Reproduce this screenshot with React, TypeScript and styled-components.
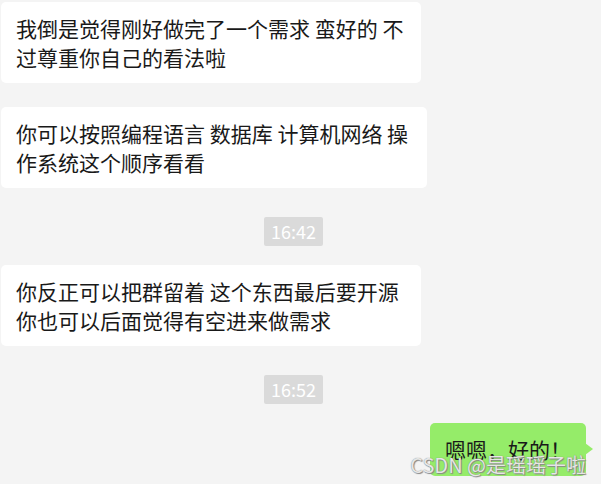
import React from 'react';
import styled, { createGlobalStyle } from 'styled-components';

const GlobalStyle = createGlobalStyle`
  html, body {
    margin: 0;
    padding: 0;
    background: #f4f4f4;
  }
  #root {
    width: 601px;
    height: 484px;
    overflow: hidden;
  }
`;

const Chat = styled.div`
  position: relative;
  box-sizing: border-box;
  width: 601px;
  height: 484px;
  padding: 2px 15px 0 1px;
  display: flex;
  flex-direction: column;
  background: #f4f4f4;
  font-family: "Microsoft YaHei", "Noto Sans CJK SC", sans-serif;
  color: #191919;
`;

const Row = styled.div<{ $mine?: boolean; $gap: number }>`
  display: flex;
  justify-content: ${(p) => (p.$mine ? 'flex-end' : 'flex-start')};
  margin-top: ${(p) => p.$gap}px;
`;

const Bubble = styled.div<{ $w?: number }>`
  box-sizing: border-box;
  width: ${(p) => (p.$w ? `${p.$w}px` : 'auto')};
  background: #ffffff;
  border-radius: 5px;
  padding: 12px 15px 12px 15px;
  font-size: 21px;
  line-height: 28.5px;
  white-space: nowrap;
`;

const MyBubble = styled(Bubble)`
  position: relative;
  background: #95ec69;
  &::after {
    content: '';
    position: absolute;
    right: -7px;
    top: 20px;
    border-top: 6px solid transparent;
    border-bottom: 6px solid transparent;
    border-left: 8px solid #95ec69;
  }
`;

const TimeRow = styled.div<{ $gap: number }>`
  display: flex;
  justify-content: center;
  margin-top: ${(p) => p.$gap}px;
`;

const Time = styled.span`
  background: #dadada;
  color: #ffffff;
  font-size: 18px;
  line-height: 29px;
  height: 29px;
  padding: 0 7px;
  border-radius: 2px;
`;

// CSDN watermark stamped over the bottom-right corner
const Watermark = styled.div`
  position: absolute;
  right: 15px;
  bottom: 9px;
  font-family: "Microsoft YaHei", "Noto Sans CJK SC", sans-serif;
  font-size: 20px;
  line-height: 21px;
  color: rgba(242, 242, 242, 0.92);
  text-shadow: 0 0 1px #6f6f6f, 1px 1px 1px #8a8a8a;
`;

export default function App() {
  return (
    <>
      <GlobalStyle />
      <Chat>
        <Row $gap={0}>
          <Bubble $w={420}>
            我倒是觉得刚好做完了一个需求 蛮好的 不
            <br />
            过尊重你自己的看法啦
          </Bubble>
        </Row>
        <Row $gap={24}>
          <Bubble $w={426}>
            你可以按照编程语言 数据库 计算机网络 操
            <br />
            作系统这个顺序看看
          </Bubble>
        </Row>
        <TimeRow $gap={29}>
          <Time>16:42</Time>
        </TimeRow>
        <Row $gap={19}>
          <Bubble $w={420}>
            你反正可以把群留着 这个东西最后要开源
            <br />
            你也可以后面觉得有空进来做需求
          </Bubble>
        </Row>
        <TimeRow $gap={29}>
          <Time>16:52</Time>
        </TimeRow>
        <Row $mine $gap={19}>
          <MyBubble>嗯嗯，好的！</MyBubble>
        </Row>
        <Watermark>CSDN @是瑶瑶子啦</Watermark>
      </Chat>
    </>
  );
}
